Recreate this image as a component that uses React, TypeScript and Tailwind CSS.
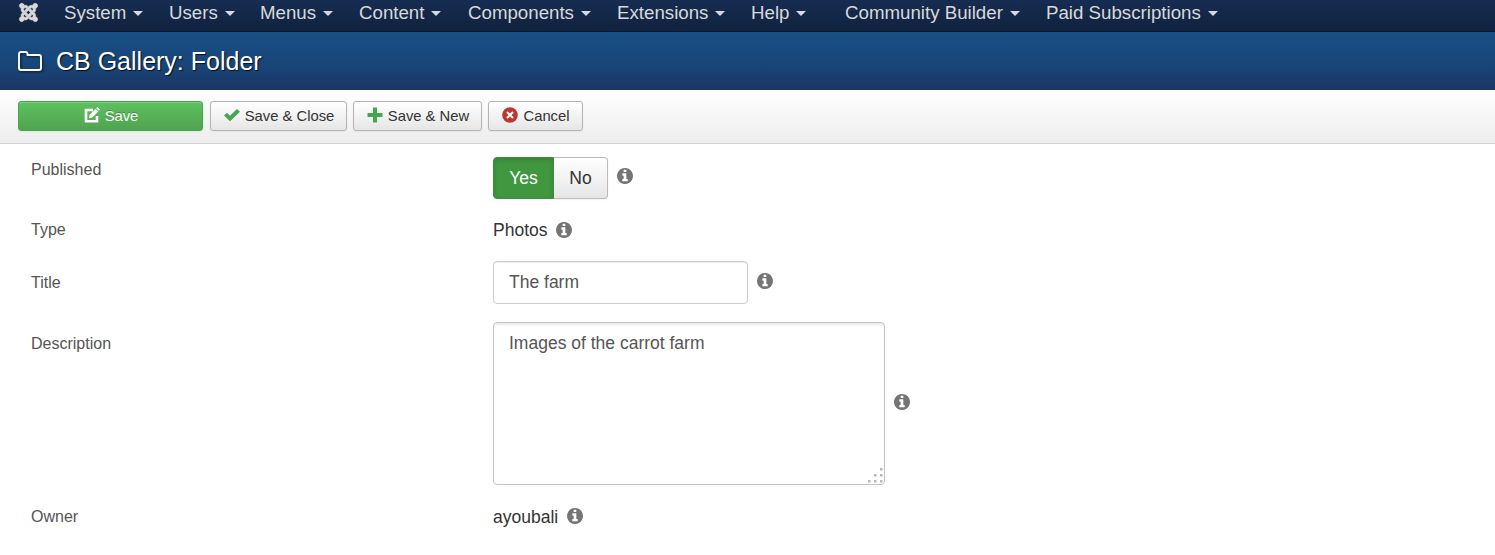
import { useState } from "react";
import type { ReactNode } from "react";
import { FaJoomla } from "react-icons/fa";

type MenuItem = {
  label: string;
  className: string;
};

const menuItems: MenuItem[] = [
  { label: "System", className: "w-[105px]" },
  { label: "Users", className: "w-[91px]" },
  { label: "Menus", className: "w-[99px]" },
  { label: "Content", className: "w-[109px]" },
  { label: "Components", className: "w-[149px]" },
  { label: "Extensions", className: "w-[134px]" },
  { label: "Help", className: "w-[94px]" },
  { label: "Community Builder", className: "w-[201px]" },
  { label: "Paid Subscriptions", className: "w-[200px]" },
];

export default function App() {
  const [published, setPublished] = useState(true);
  const [title, setTitle] = useState("The farm");
  const [description, setDescription] = useState("Images of the carrot farm");

  return (
    <div className="h-[555px] overflow-hidden bg-white font-['Liberation_Sans',Arial,sans-serif] text-[#333]">
      <nav className="flex h-8 items-start border-b border-[#0d1a2c] bg-linear-to-b from-[#162c51] to-[#10223e] pl-[18px] text-[18.7px] leading-[25px] text-[#d9d9d9]">
        <FaJoomla className="mt-[2px] mr-[25px] h-[21px] w-[21px] shrink-0 overflow-visible stroke-[#d9d9d9] stroke-[14px]" />
        {menuItems.map((item) => (
          <a key={item.label} className={"flex shrink-0 items-start whitespace-nowrap " + item.className}>
            {item.label}
            <span className="mt-[11px] ml-[7px] border-x-5 border-t-5 border-x-transparent border-t-[#d9d9d9]" />
          </a>
        ))}
      </nav>

      <header className="flex h-[58px] items-center bg-linear-to-b from-[#184f86] via-[#18477b] to-[#1b3665] pl-[18px] text-white">
        <FolderIcon />
        <h1 className="ml-[14px] text-[25px] leading-[30px] [text-shadow:1px_1px_1px_rgba(0,0,0,0.8)]">
          CB Gallery: Folder
        </h1>
      </header>

      <div className="flex h-[54px] items-start border-b border-[#d3d3d3] bg-linear-to-b from-white to-[#ededed] pt-[11px] pl-[18px]">
        <button className="flex h-[30px] w-[185px] items-center justify-center gap-[5px] rounded-[3px] border border-[#46a546] bg-linear-to-b from-[#5fc15f] to-[#51a351] pl-px text-[14.8px] text-white shadow-[inset_0_1px_0_rgba(255,255,255,0.2),0_1px_2px_rgba(0,0,0,0.05)] [text-shadow:0_-1px_0_rgba(0,0,0,0.25)]">
          <EditIcon />
          Save
        </button>
        <ToolbarButton className="ml-[7px] w-[137px]" icon={<CheckIcon />} label="Save & Close" />
        <ToolbarButton className="ml-[6px] w-[129px]" icon={<PlusIcon />} label="Save & New" />
        <ToolbarButton className="ml-[6px] w-[95px]" icon={<CancelIcon />} label="Cancel" />
      </div>

      <form className="pt-[13px] pl-[31px] text-[17.5px]">
        <Row label="Published" className="h-[61px]" labelClass="mt-[3px]">
          <div className="flex h-[42px] w-[115px]">
            <button
              type="button"
              onClick={() => setPublished(true)}
              className={
                "w-[61px] rounded-l-[4px] " +
                (published
                  ? "border border-[#3c8d3c] bg-[#409740] text-white shadow-[inset_0_2px_4px_rgba(0,0,0,0.15)]"
                  : "border border-[#bbb] bg-[#f2f2f2]")
              }
            >
              Yes
            </button>
            <button
              type="button"
              onClick={() => setPublished(false)}
              className="w-[54px] rounded-r-[4px] border border-l-0 border-[#bbb] bg-linear-to-b from-white to-[#e6e6e6] shadow-[0_1px_2px_rgba(0,0,0,0.05)]"
            >
              No
            </button>
          </div>
          <Info className="mt-[11px] ml-[9px]" />
        </Row>

        <Row label="Type" className="h-[43px]" labelClass="mt-[2px]">
          <span className="leading-6">Photos</span>
          <Info className="mt-[4px] ml-[9px]" />
        </Row>

        <Row label="Title" className="h-[61px]" labelClass="mt-[12px]">
          <input
            value={title}
            onChange={(e) => setTitle(e.target.value)}
            className="h-[43px] w-[255px] rounded-[4px] border border-[#ccc] px-[15px] pb-px text-[#555] shadow-[inset_0_1px_1px_rgba(0,0,0,0.075)] outline-none"
          />
          <Info className="mt-[12px] ml-[9px]" />
        </Row>

        <Row label="Description" className="h-[182px]" labelClass="mt-[12px]">
          <div className="relative h-[163px] w-[392px]">
            <textarea
              value={description}
              onChange={(e) => setDescription(e.target.value)}
              className="block h-full w-full resize-none rounded-[4px] border border-[#c4c4c4] px-[15px] py-[8px] leading-6 text-[#555] shadow-[inset_0_2px_2px_rgba(0,0,0,0.075)] outline-none"
            />
            <ResizeGrip />
          </div>
          <Info className="mt-[72px] ml-[9px]" />
        </Row>

        <Row label="Owner" className="h-[40px]" labelClass="mt-[3px]">
          <span className="mt-px leading-6">ayoubali</span>
          <Info className="mt-[4px] ml-[9px]" />
        </Row>
      </form>
    </div>
  );
}

function Row({ label, className, labelClass, children }: { label: string; className: string; labelClass: string; children: ReactNode }) {
  return (
    <div className={"flex items-start " + className}>
      <label className={"w-[462px] shrink-0 text-[16px] leading-5 text-[#555] " + labelClass}>{label}</label>
      {children}
    </div>
  );
}

function ToolbarButton({ className, icon, label }: { className: string; icon: ReactNode; label: string }) {
  return (
    <button
      className={
        "flex h-[30px] items-center justify-center gap-[5px] rounded-[3px] border border-[#b3b3b3] bg-linear-to-b from-white to-[#e6e6e6] pl-px text-[14.8px] whitespace-nowrap shadow-[0_1px_2px_rgba(0,0,0,0.05)] " +
        className
      }
    >
      {icon}
      {label}
    </button>
  );
}

function Info({ className }: { className: string }) {
  return (
    <svg className={"h-4 w-4 shrink-0 text-[#757575] " + className} viewBox="0 0 1536 1536" fill="currentColor">
      <path d="M1024 1248v-160q0-14-9-23t-23-9h-96V544q0-14-9-23t-23-9H544q-14 0-23 9t-9 23v160q0 14 9 23t23 9h96v320h-96q-14 0-23 9t-9 23v160q0 14 9 23t23 9h448q14 0 23-9t9-23zM896 352V192q0-14-9-23t-23-9H672q-14 0-23 9t-9 23v160q0 14 9 23t23 9h192q14 0 23-9t9-23zM1536 768q0 209-103 385.5T1153.5 1433 768 1536t-385.5-103T103 1153.5 0 768t103-385.5T382.5 103 768 0t385.5 103T1433 382.5 1536 768z" />
    </svg>
  );
}

function FolderIcon() {
  return (
    <svg className="h-5 w-6 shrink-0 drop-shadow-[1px_1px_1px_rgba(0,0,0,0.6)]" viewBox="0 0 24 20" fill="none" stroke="currentColor" strokeWidth="1.9" strokeLinejoin="round">
      <path d="M1 17V3Q1 1 3 1H7.5Q9.5 1 9.5 3V4H21Q23 4 23 6V17Q23 19 21 19H3Q1 19 1 17Z" />
    </svg>
  );
}

function EditIcon() {
  return (
    <svg className="mb-[2px] h-4 w-4 shrink-0" viewBox="0 0 16 16" fill="none">
      <path d="M9 3H2V14.3H13V9" stroke="currentColor" strokeWidth="2.6" />
      <path d="M5 11.3L5.6 7.8L11.5 1.9L14.2 4.6L8.3 10.5Z" fill="currentColor" />
      <path d="M12.2 1.3L13.5 0L16 2.5L14.7 3.8Z" fill="currentColor" />
    </svg>
  );
}

function CheckIcon() {
  return (
    <svg className="mb-[2px] h-4 w-4 shrink-0 text-[#46a54f]" viewBox="0 0 16 16" fill="currentColor">
      <path d="M0 8.5L3 5.7L6 8.7L13 2L16 4.7L6 14.3Z" />
    </svg>
  );
}

function PlusIcon() {
  return (
    <svg className="mb-[2px] h-4 w-4 shrink-0 text-[#46a54f]" viewBox="0 0 16 16" fill="currentColor">
      <path d="M6 0.5H10V6H15.5V10H10V15.5H6V10H0.5V6H6Z" />
    </svg>
  );
}

function CancelIcon() {
  return (
    <svg className="mb-[2px] h-4 w-4 shrink-0" viewBox="0 0 16 16">
      <circle cx="8" cy="8" r="7.8" fill="#bd362f" />
      <path d="M5 5L11 11M11 5L5 11" stroke="#fff" strokeWidth="2" />
    </svg>
  );
}

function ResizeGrip() {
  return (
    <svg className="absolute right-[2px] bottom-[2px] h-[15px] w-[15px]" viewBox="0 0 15 15" fill="#b9b9b9">
      <path d="M12 0h2.5v2.5H12zM6 6h2.5v2.5H6zM12 6h2.5v2.5H12zM0 12h2.5v2.5H0zM6 12h2.5v2.5H6zM12 12h2.5v2.5H12z" />
    </svg>
  );
}
